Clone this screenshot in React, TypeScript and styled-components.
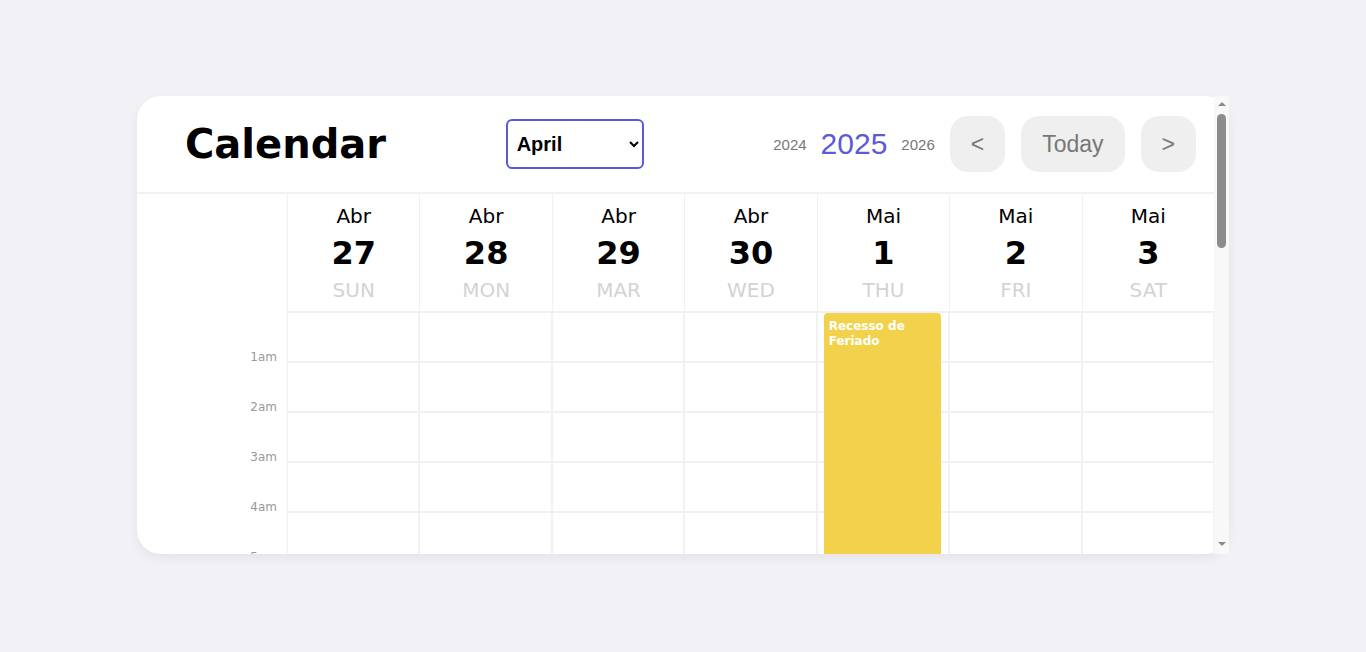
import React from "react";
import styled, { createGlobalStyle } from "styled-components";

const GlobalStyle = createGlobalStyle`
  html, body {
    margin: 0;
    padding: 0;
    background: #f2f2f6;
  }
  body {
    font-family: "DejaVu Sans", Verdana, sans-serif;
  }
  * { box-sizing: border-box; }
`;

const Page = styled.div`
  display: flex;
  justify-content: center;
  align-items: flex-start;
  padding-top: 96px;
  min-height: 100vh;
`;

const Card = styled.div`
  display: flex;
  width: 1092px;
  height: 458px;
  background: #ffffff;
  border-radius: 24px;
  box-shadow: 0 4px 12px rgba(0, 0, 0, 0.06);
`;

const ScrollArea = styled.div`
  flex: 1;
  min-width: 0;
  overflow-y: auto;
  border-radius: 24px 0 0 24px;
  scrollbar-width: none;
  &::-webkit-scrollbar {
    display: none;
  }
`;

const Track = styled.div`
  width: 15px;
  flex-shrink: 0;
  display: flex;
  flex-direction: column;
  align-items: center;
  background: #f8f8f8;
`;

const ArrowButton = styled.div<{ $dir: "up" | "down" }>`
  height: 15px;
  width: 15px;
  display: flex;
  justify-content: center;
  align-items: flex-start;
  padding-top: ${(p) => (p.$dir === "up" ? "6px" : "3px")};

  &::before {
    content: "";
    width: 0;
    height: 0;
    border-left: 4px solid transparent;
    border-right: 4px solid transparent;
    ${(p) =>
      p.$dir === "up"
        ? "border-bottom: 4px solid #8a8a8a;"
        : "border-top: 4px solid #8a8a8a;"}
  }
`;

const Thumb = styled.div`
  width: 9px;
  height: 134px;
  margin-top: 3px;
  border-radius: 5px;
  background: #8c8c8c;
`;

const TrackSpace = styled.div`
  flex: 1;
`;

const Header = styled.header`
  display: flex;
  align-items: center;
  justify-content: space-between;
  height: 98px;
  padding: 0 18px 0 48px;
  border-bottom: 2px solid #f0f0f5;
`;

const Title = styled.h1`
  margin: 0;
  font-family: "DejaVu Sans", Verdana, sans-serif;
  font-size: 40px;
  font-weight: 700;
  color: #000;
`;

const MonthSelect = styled.select`
  width: 138px;
  height: 50px;
  margin-right: 10px;
  border: 2px solid #5b5bd6;
  border-radius: 6px;
  background: #fff;
  color: #000;
  font-family: "Liberation Sans", Arial, sans-serif;
  font-size: 20px;
  font-weight: 700;
  padding: 0 4px 0 5px;
  outline: none;
`;

const Controls = styled.div`
  display: flex;
  align-items: center;
  gap: 15px;
`;

const Years = styled.div`
  display: flex;
  align-items: center;
  gap: 14px;
`;

const YearButton = styled.button<{ $current?: boolean }>`
  border: none;
  background: none;
  padding: 0;
  font-family: "Liberation Sans", Arial, sans-serif;
  font-size: ${(p) => (p.$current ? "30px" : "15px")};
  color: ${(p) => (p.$current ? "#5b5bd6" : "#777")};
  cursor: pointer;
`;

const NavGroup = styled.div`
  display: flex;
  align-items: center;
  gap: 16px;
`;

const NavButton = styled.button`
  height: 56px;
  padding: 0 21px;
  border: none;
  border-radius: 18px;
  background: #efefef;
  color: #777;
  font-family: "Liberation Sans", Arial, sans-serif;
  font-size: 23px;
  cursor: pointer;
`;

const Grid = styled.div`
  display: grid;
  grid-template-columns: 150px repeat(7, 1fr);
`;

const Corner = styled.div`
  height: 118px;
`;

const DayHead = styled.div`
  height: 118px;
  display: flex;
  flex-direction: column;
  align-items: center;
  gap: 7px;
  padding-top: 10px;
  border-left: 1px solid #f0f0f5;
  border-bottom: 1px solid #f0f0f5;
`;

const DayMonth = styled.span`
  font-size: 20px;
  line-height: 24px;
  color: #000;
`;

const DayNumber = styled.span`
  font-size: 32px;
  line-height: 36px;
  font-weight: 700;
  color: #000;
`;

const DayName = styled.span`
  font-size: 20px;
  line-height: 24px;
  color: #d3d3d3;
`;

const TimeColumn = styled.div`
  display: flex;
  flex-direction: column;
`;

const TimeLabel = styled.div`
  height: 50px;
  padding: 38px 10px 0 0;
  text-align: right;
  font-size: 12px;
  line-height: 14px;
  color: #999;
`;

const DayColumn = styled.div`
  position: relative;
  display: flex;
  flex-direction: column;
`;

const Slot = styled.div`
  height: 50px;
  border: 1px solid #f0f0f5;
`;

const Event = styled.div`
  position: absolute;
  top: 1px;
  left: 7px;
  right: 8px;
  bottom: 1px;
  padding: 6px 5px 5px;
  border-radius: 4px;
  background: #f3d24b;
  color: #fff;
  font-size: 12px;
  line-height: 15px;
  font-weight: 700;
`;

const days = [
  { m: "Abr", d: 27, w: "SUN" },
  { m: "Abr", d: 28, w: "MON" },
  { m: "Abr", d: 29, w: "MAR" },
  { m: "Abr", d: 30, w: "WED" },
  { m: "Mai", d: 1, w: "THU", event: "Recesso de Feriado" },
  { m: "Mai", d: 2, w: "FRI" },
  { m: "Mai", d: 3, w: "SAT" },
];

const months = [
  "January", "February", "March", "April", "May", "June",
  "July", "August", "September", "October", "November", "December",
];

const hours = Array.from({ length: 24 }, (_, i) => {
  const h = i + 1;
  if (h === 12) return "12pm";
  if (h === 24) return "12am";
  return h < 12 ? `${h}am` : `${h - 12}pm`;
});

export default function App() {
  return (
    <>
      <GlobalStyle />
      <Page>
        <Card>
          <ScrollArea>
            <Header>
              <Title>Calendar</Title>
              <MonthSelect defaultValue="April">
                {months.map((m) => (
                  <option key={m} value={m}>
                    {m}
                  </option>
                ))}
              </MonthSelect>
              <Controls>
                <Years>
                  <YearButton>2024</YearButton>
                  <YearButton $current>2025</YearButton>
                  <YearButton>2026</YearButton>
                </Years>
                <NavGroup>
                  <NavButton>&lt;</NavButton>
                  <NavButton>Today</NavButton>
                  <NavButton>&gt;</NavButton>
                </NavGroup>
              </Controls>
            </Header>
            <Grid>
              <Corner />
              {days.map((d) => (
                <DayHead key={`${d.m}${d.d}`}>
                  <DayMonth>{d.m}</DayMonth>
                  <DayNumber>{d.d}</DayNumber>
                  <DayName>{d.w}</DayName>
                </DayHead>
              ))}
              <TimeColumn>
                {hours.map((h) => (
                  <TimeLabel key={h}>{h}</TimeLabel>
                ))}
              </TimeColumn>
              {days.map((d) => (
                <DayColumn key={`col${d.m}${d.d}`}>
                  {hours.map((h) => (
                    <Slot key={h} />
                  ))}
                  {d.event && <Event>{d.event}</Event>}
                </DayColumn>
              ))}
            </Grid>
          </ScrollArea>
          <Track aria-hidden>
            <ArrowButton $dir="up" />
            <Thumb />
            <TrackSpace />
            <ArrowButton $dir="down" />
          </Track>
        </Card>
      </Page>
    </>
  );
}
